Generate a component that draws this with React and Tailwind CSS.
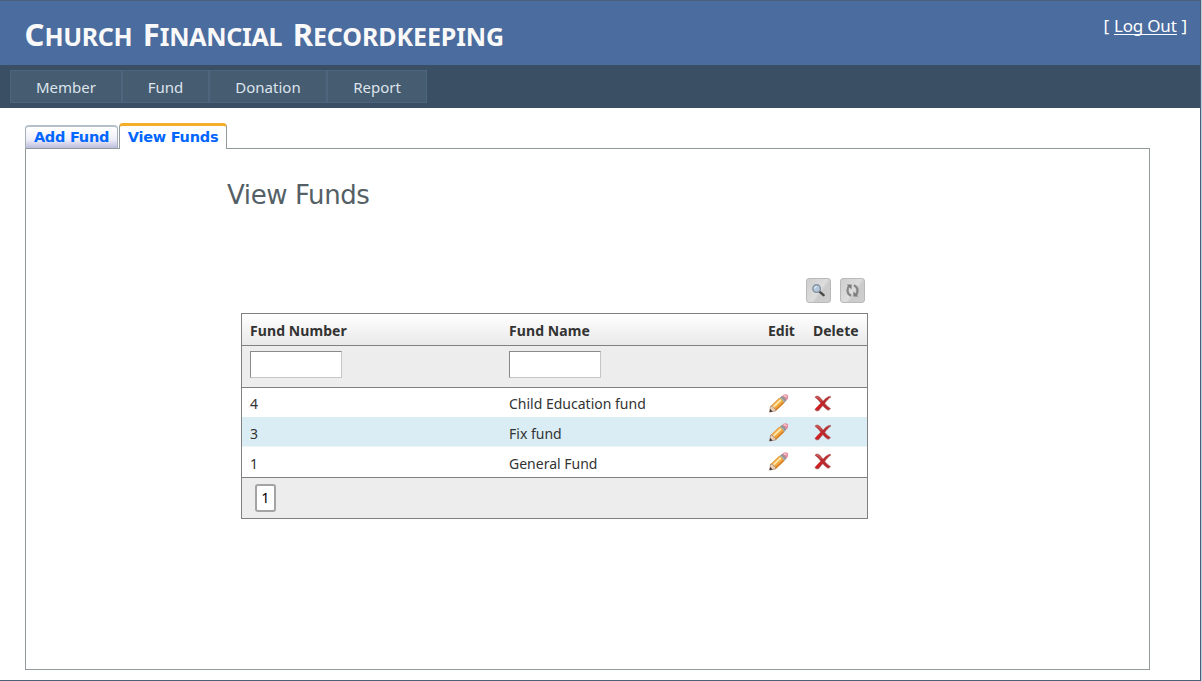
import React from "react";

const segoe = "font-['Noto_Sans','Open_Sans',sans-serif]";
const verdana = "font-['DejaVu_Sans',Verdana,sans-serif]";

const menu = [
  { label: "Member", width: "w-[112px]" },
  { label: "Fund", width: "w-[87px]" },
  { label: "Donation", width: "w-[118px]" },
  { label: "Report", width: "w-[100px]" },
];

const funds = [
  { id: 4, name: "Child Education fund", row: "h-[29px] bg-white", pad: "pt-px", iconPad: "pt-px" },
  { id: 3, name: "Fix fund", row: "h-[30px] bg-[#daecf4] border-b border-[#eef5f8]", pad: "pt-[3px]", iconPad: "pt-px" },
  { id: 1, name: "General Fund", row: "h-[30px] bg-white", pad: "pt-[3px]", iconPad: "pb-px" },
];

const titleWords = [
  { first: "C", rest: "hurch", spacing: "tracking-[-0.35px]" },
  { first: "F", rest: "inancial", spacing: "tracking-[-0.3px]" },
  { first: "R", rest: "ecordkeeping", spacing: "tracking-[-0.1px]" },
];

function Pencil() {
  return (
    <svg width="20" height="19" viewBox="0 0 20 19" className="relative left-px block">
      <path d="M12.6 2.4L14.6.7Q16 .1 17.6.5L19 1.2Q19.4 3.5 18.8 4.8L16.6 7.4Z" fill="#e3899b" />
      <path d="M14.8 2.3Q16.8 1 17.6 3.2" stroke="#f6c5cd" strokeWidth="1.5" fill="none" />
      <path d="M10.2 4.4L12.8 2.1Q16.2 3.2 17.2 6.8L14.8 9.4Z" fill="#8f9695" />
      <path d="M12.2 4L15.6 7.6" stroke="#b9bfbe" strokeWidth="1" />
      <path d="M1.6 12.2L10.2 3.9Q13.9 5.3 15 9.2L6.6 17.2Z" fill="#f2a93f" />
      <path d="M2 12.1L10.2 4.3" stroke="#d99a52" strokeWidth=".8" />
      <path d="M3.9 13.4L12 5.8" stroke="#fde7ac" strokeWidth="1.9" />
      <path d="M6.1 16.6L14.4 8.8" stroke="#d07c2c" strokeWidth="1.4" />
      <path d="M1.6 12L4 12.6L4.8 14.2L6.4 15L6.8 16.9L.7 18Z" fill="#ecd0b4" stroke="#9c7a66" strokeWidth=".6" />
      <path d="M1.1 14.9L3.9 17.5L.4 18.3Z" fill="#453638" />
    </svg>
  );
}

function Cross() {
  return (
    <svg width="18" height="17" viewBox="0 0 18 17" className="block">
      <path d="M.9 2.2Q2.2.4 4.3 1.2C6.5 2.5 7.7 4.3 9.1 6.1Q11.6 2.7 14.8 1.4Q16.7.9 17 2.1C14.5 3.7 12.3 6.1 10.9 8.4Q13.1 11.5 16.5 13.5Q15.6 15.4 13.9 15.3Q11 13.7 8.8 10.8Q6.4 13.3 5 15.5Q2.3 17 .8 14.6Q3.7 11 6.7 8.2Q4.4 4.5.9 2.2Z" fill="#b82a2e" stroke="#b07476" strokeWidth=".6" />
      <path d="M2.3 2.1Q4.4 1.6 7.4 6.1" stroke="#dc6a67" strokeWidth="1" fill="none" />
      <path d="M2.3 14.3L7.6 9" stroke="#d81b1d" strokeWidth="1.8" />
    </svg>
  );
}

function ToolButton({ children }) {
  return (
    <button className="flex h-[25px] w-[25px] items-center justify-center rounded-[3px] border border-[#b9b9b9] bg-[linear-gradient(125deg,#cecece_0%,#dddddd_52%,#cbcbcb_62%,#cecece_100%)]">
      {children}
    </button>
  );
}

export default function App() {
  return (
    <div className={`flex h-[681px] w-[1202px] flex-col border-r border-[#b9cbe0] bg-white ${segoe}`}>
      <div className="flex h-[681px] w-[1201px] flex-col border-t border-r border-b border-[#496077]">
        <header className="flex h-[64px] shrink-0 justify-between bg-[#4b6c9e] text-[#f9f9f9]">
          <h1 className="flex gap-[10.5px] pt-[11px] pl-[24.5px] text-[31px] leading-[44px] font-bold">
            {titleWords.map((w) => (
              <span key={w.first} className="whitespace-nowrap uppercase">
                {w.first}
                <span className={`text-[25px] ${w.spacing}`}>{w.rest}</span>
              </span>
            ))}
          </h1>
          <div className="flex gap-[5px] pt-[12px] pr-[13px] text-[17px] leading-[26px] tracking-[-0.2px] text-white">
            <span>[</span>
            <a href="#" className="h-[22px] border-b border-white leading-[26px]">Log Out</a>
            <span>]</span>
          </div>
        </header>
        <nav className="flex h-[43px] shrink-0 bg-[#3a4f63] pt-[5px] pl-[10px]">
          {menu.map((m) => (
            <a key={m.label} href="#" className={`flex h-[33px] items-center justify-center border border-[#4e667d] bg-[#465c71] pt-px text-[15px] text-[#dde4ec] ${m.width}`}>
              {m.label}
            </a>
          ))}
        </nav>
        <main className="pt-[15px] pl-[25px]">
          <div className={`flex h-[26px] items-end text-[14.5px] font-bold tracking-[-0.25px] text-[#0066ff] ${verdana}`}>
            <div className="flex h-[24px] w-[93px] items-center justify-center rounded-t-[4px] border-x border-t-2 border-b border-x-[#a3b0bb] border-t-[#b4c0ca] border-b-[#919b9c] bg-[linear-gradient(#ffffff_5%,#eeeef8_60%,#bcbcdc)]">
              <span className="whitespace-nowrap">Add Fund</span>
            </div>
            <div className="h-px w-px bg-[#919b9c]" />
            <div className="z-10 flex h-[26px] w-[108px] items-center justify-center rounded-t-[4px] border-x border-t-[3px] border-x-[#919b9c] border-t-[#f4ae2c] bg-white">
              <span className="whitespace-nowrap">View Funds</span>
            </div>
          </div>
          <section className="-mt-px h-[522px] w-[1125px] border border-[#919b9c] pt-[29px]">
            <h2 className={`pl-[201px] text-[26px] leading-[34px] tracking-[-0.4px] text-[#555f66] ${verdana}`}>View Funds</h2>
            <div className="mt-[66px] ml-[215px] flex w-[624px] justify-end gap-[9px]">
              <ToolButton>
                <svg width="15" height="15" viewBox="0 0 15 15">
                  <path d="M8.8 8.8L12.6 12.2" stroke="#484848" strokeWidth="2.4" strokeLinecap="round" />
                  <circle cx="5.6" cy="5.6" r="3.8" fill="#b3c6da" stroke="#8391a0" strokeWidth="1.4" />
                  <path d="M3.6 5.7Q3.9 3.7 5.9 3.4" stroke="#e3ecf4" strokeWidth="1.2" fill="none" />
                </svg>
              </ToolButton>
              <ToolButton>
                <svg width="15" height="15" viewBox="0 0 15 15">
                  <path d="M6.2 12.6Q2.7 11.5 2.5 7.5Q2.4 4.6 4.2 3.2M8.8 2.4Q12.3 3.5 12.5 7.5Q12.6 10.4 10.8 11.8" stroke="#858585" strokeWidth="2.3" fill="none" />
                  <path d="M1.6 1.6H6.6V6.6ZM13.4 13.4H8.4V8.4Z" fill="#7b7b7b" />
                </svg>
              </ToolButton>
            </div>
            <div className="mt-[10px] ml-[215px] flex h-[206px] w-[627px] flex-col border border-[#808080] text-[14px] text-[#333]">
              <div className="flex h-[32px] items-center border-b border-[#808080] bg-[linear-gradient(#ffffff,#e9e9e9)] pt-[2px] pl-[8px] font-bold">
                <span className="w-[259px] tracking-[0.08px]">Fund Number</span>
                <span className="w-[259px] tracking-[0.08px]">Fund Name</span>
                <span className="w-[45px]">Edit</span>
                <span>Delete</span>
              </div>
              <div className="flex h-[42px] border-b border-[#808080] bg-[#ededed] pt-[5px] pl-[8px]">
                <input className="mr-[167px] h-[27px] w-[92px] border border-t-[#8a8a8a] border-r-[#c6c6c6] border-b-[#c6c6c6] border-l-[#8a8a8a] bg-white" />
                <input className="h-[27px] w-[92px] border border-t-[#8a8a8a] border-r-[#c6c6c6] border-b-[#c6c6c6] border-l-[#8a8a8a] bg-white" />
              </div>
              {funds.map((f) => (
                <div key={f.id} className={`flex items-center pl-[8px] ${f.row}`}>
                  <span className={`w-[259px] ${f.pad}`}>{f.id}</span>
                  <span className={`w-[259px] ${f.pad}`}>{f.name}</span>
                  <span className={`w-[46px] ${f.iconPad}`}><Pencil /></span>
                  <span className={f.iconPad}><Cross /></span>
                </div>
              ))}
              <div className="flex flex-1 border-t border-[#808080] bg-[#ededed] pt-[6px] pl-[13px]">
                <span className="flex h-[28px] w-[21px] items-center justify-center rounded-[3px] border-2 border-[#a4a4a4] bg-white text-[14.5px] text-black">1</span>
              </div>
            </div>
          </section>
        </main>
      </div>
    </div>
  );
}
